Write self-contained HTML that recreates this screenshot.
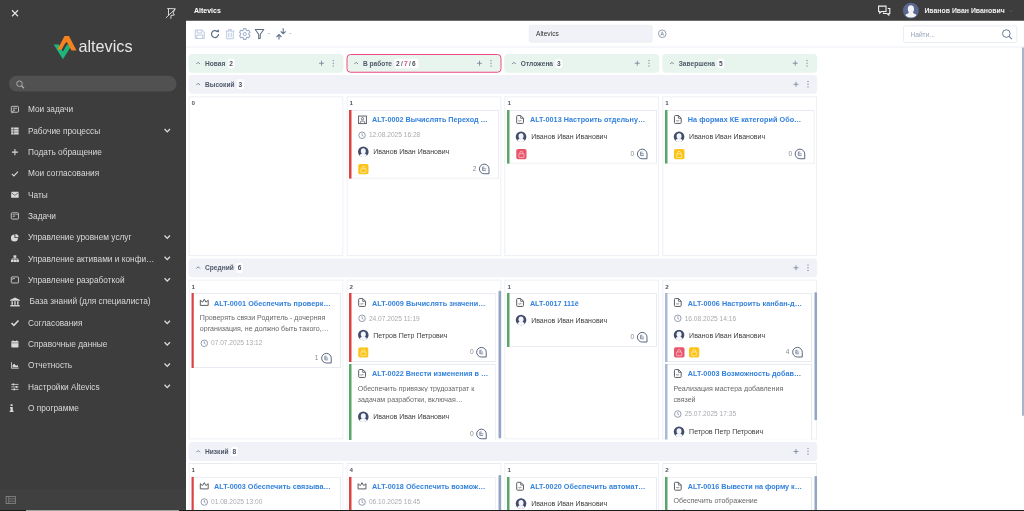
<!DOCTYPE html><html lang="ru"><head><meta charset="utf-8"><title>Altevics</title><style>
*{box-sizing:border-box;margin:0;padding:0}
html,body{width:1024px;height:511px;overflow:hidden;background:#fff}
#wrap{position:absolute;left:0;top:0;width:4096px;height:2044px;transform:scale(.25);transform-origin:0 0;overflow:hidden}
body{font-family:"Liberation Sans",sans-serif;position:relative;color:#444;-webkit-font-smoothing:antialiased}
.abs{position:absolute}
#side{position:absolute;left:0;top:0;width:744px;height:2044px;background:#3d3d3d}
#top{position:absolute;left:744px;top:0;width:3352px;height:82.8px;background:#3d3d3d}
.mi{position:absolute;left:112px;font-size:33.2px;color:#d8d8d8;white-space:nowrap;line-height:40px;height:40px}
.mic{position:absolute;left:43.2px;width:40px;height:40px}
.chev{position:absolute;left:655.2px;width:28px;height:20px}
.colh{position:absolute;top:215.6px;height:75.2px;width:620px;background:#e7f5ee;border-radius:16px}
.rowh{position:absolute;left:754px;width:2514.8px;height:75.2px;background:#f0f2f8;border-radius:16px}
.ht{position:absolute;left:66px;top:17.6px;font-size:26.4px;font-weight:bold;color:#515969;line-height:40px;white-space:nowrap}
.ht .n{display:inline-block;background:#fff;border-radius:8px;padding:0 6px;margin-left:10px;font-weight:bold;color:#4a5160;font-size:26.4px}
.cell{position:absolute;width:620px;height:640px;background:#fff;overflow:hidden}
.bd{position:absolute;left:0;top:0;right:0;bottom:0;border:4px solid #e8ecf2;pointer-events:none}
.cnt{position:absolute;left:12.4px;top:12px;font-size:24.8px;font-weight:bold;color:#4f5560;line-height:32px}
.card{position:absolute;left:10.8px;background:#fff;overflow:hidden}
.stripe{position:absolute;left:0;top:0;bottom:0;width:10px}
.tt{position:absolute;left:91.6px;font-size:28.88px;font-weight:bold;color:#3382dc;white-space:nowrap;line-height:40px}
.dt{position:absolute;left:79.2px;font-size:26.4px;color:#a9abb0;white-space:nowrap;line-height:36px}
.nm{position:absolute;left:96.8px;font-size:28px;color:#3c3c3c;white-space:nowrap;line-height:36px}
.ds{position:absolute;left:34.4px;font-size:28.28px;color:#686868;white-space:nowrap;line-height:44px}
.cn{position:absolute;font-size:26.4px;color:#8a8a8a;line-height:36px;text-align:right;width:40px}
.sb{position:absolute;width:10.8px;background:#93a6c8;border-radius:4px}
svg{display:block;overflow:visible}
.mi,.ht,.cnt,.tt,.dt,.nm,.ds,.cn,.tx{filter:brightness(1)}
</style></head><body><div id="wrap">
<div id="side">
<div class="abs" style="left:46px;top:39.2px"><svg width="28" height="28" viewBox="0 0 7 7" style=""><path d="M.5.5l6 6M6.500.5l-6 6" stroke="#e8e8e8" stroke-width="1.100" fill="none"/></svg></div>
<div class="abs" style="left:662px;top:30px"><svg width="44" height="48" viewBox="0 0 11 12" style=""><path d="M1.700 1L9.900 1.300M3 1.200V7.500M9.900 1.400L.3 10.500M9.500 1.500L7.500 5.500L8.900 7.500L5.500 8L5.300 11.300" stroke="#dcdcdc" stroke-width=".95" fill="none"/></svg></div>
<div class="abs" style="left:212px;top:140px"><svg width="96" height="100" viewBox="0 0 24 25" style=""><path d="M.7 9.500h5.200l4 7 4.300-7h5l-9.300 14.700z" fill="#1fb57a"/><path d="M4.500 14.500l7-13.500h4.500l7.500 14.500h-5l-4.800-8.700-4.200 7.700z" fill="#f58220"/><path d="M9.900 16.500l3.600-6.500 1.800 3.300-3.400 5.900z" fill="#1fb57a"/><path d="M13.500 10l-3.600 6.500-1.100-2 3.600-6.700z" fill="#3d3d3d"/></svg></div>
<div class="abs tx" style="left:314px;top:146.8px;font-size:64.8px;line-height:76px;color:#e6e6e6;white-space:nowrap">altevics</div>
<div class="abs" style="left:36px;top:303.2px;width:670px;height:63.2px;border-radius:32px;background:#515151"></div>
<div class="abs" style="left:64px;top:320.8px"><svg width="34" height="34" viewBox="0 0 8.500 8.500" style=""><circle cx="3.500" cy="3.500" r="2.800" fill="none" stroke="#b4b4b4" stroke-width=".9"/><path d="M5.500 5.500l2.500 2.500" stroke="#b4b4b4" stroke-width="1.100"/></svg></div>
<div class="mic" style="top:421.6px;"><svg width="33.2" height="33.2" viewBox="0 0 9 9" style=""><rect x=".6" y=".9" width="7.800" height="6.400" rx="1" fill="none" stroke="#d9d9d9" stroke-width=".9"/><path d="M2.300 3h4.500M2.300 4.800h2" stroke="#d9d9d9" stroke-width=".8"/><path d="M1 8.500c.5-2 1.500-3 3.500-3" stroke="#d9d9d9" stroke-width=".8" fill="none"/></svg></div>
<div class="mi" style="top:418.4px;left:112px">Мои задачи</div>
<div class="mic" style="top:506.92px;"><svg width="33.2" height="33.2" viewBox="0 0 9 9" style=""><rect x=".5" y=".8" width="8" height="7.600" fill="#d9d9d9"/><path d="M3.200 .8v7.600M.5 3.200h8M.5 5.800h8" stroke="#3d3d3d" stroke-width=".6"/></svg></div>
<div class="mi" style="top:503.72px;left:112px">Рабочие процессы</div>
<div class="chev" style="top:512.52px"><svg width="28" height="20" viewBox="0 0 7 5" style=""><path d="M.8 .8l2.700 2.800 2.700-2.800" stroke="#e0e0e0" stroke-width="1.300" fill="none"/></svg></div>
<div class="mic" style="top:592.24px;"><svg width="33.2" height="33.2" viewBox="0 0 9 9" style=""><path d="M4.500 1.200v6.600M1.200 4.500h6.600" stroke="#d9d9d9" stroke-width="1.150"/></svg></div>
<div class="mi" style="top:589.04px;left:112px">Подать обращение</div>
<div class="mic" style="top:677.56px;"><svg width="33.2" height="33.2" viewBox="0 0 9 9" style=""><path d="M1.200 4.800l2.200 2.200 4.400-4.700" stroke="#d9d9d9" stroke-width="1.200" fill="none"/></svg></div>
<div class="mi" style="top:674.36px;left:112px">Мои согласования</div>
<div class="mic" style="top:762.88px;"><svg width="33.2" height="33.2" viewBox="0 0 9 9" style=""><rect x=".4" y="1.200" width="8.200" height="6.400" rx=".6" fill="#d9d9d9"/><path d="M.4 2l4.100 3 4.100-3" stroke="#3d3d3d" stroke-width=".7" fill="none"/></svg></div>
<div class="mi" style="top:759.68px;left:112px">Чаты</div>
<div class="mic" style="top:848.2px;"><svg width="33.2" height="33.2" viewBox="0 0 9 9" style=""><rect x=".6" y=".9" width="7.800" height="6.800" rx="1" fill="none" stroke="#d9d9d9" stroke-width=".9"/><path d="M2.200 3h3M2.200 4.700h2.200M6 2.600l.6.600 1-1.200" stroke="#d9d9d9" stroke-width=".8" fill="none"/></svg></div>
<div class="mi" style="top:845px;left:112px">Задачи</div>
<div class="mic" style="top:933.52px;"><svg width="33.2" height="33.2" viewBox="0 0 9 9" style=""><path d="M4 1.200v3.800h3.800a3.800 3.800 0 1 1-3.800-3.800z" fill="#d9d9d9"/><path d="M5 .5a3.800 3.800 0 0 1 3.600 3.600h-3.600z" fill="#d9d9d9"/></svg></div>
<div class="mi" style="top:930.32px;left:112px">Управление уровнем услуг</div>
<div class="chev" style="top:939.12px"><svg width="28" height="20" viewBox="0 0 7 5" style=""><path d="M.8 .8l2.700 2.800 2.700-2.800" stroke="#e0e0e0" stroke-width="1.300" fill="none"/></svg></div>
<div class="mic" style="top:1018.84px;"><svg width="33.2" height="33.2" viewBox="0 0 9 9" style=""><rect x="3" y=".6" width="3" height="2.700" fill="#d9d9d9"/><rect x=".3" y="5.200" width="2.700" height="2.700" fill="#d9d9d9"/><rect x="3.200" y="5.200" width="2.700" height="2.700" fill="#d9d9d9"/><rect x="6.100" y="5.200" width="2.700" height="2.700" fill="#d9d9d9"/><path d="M4.500 3v1.500M1.600 5.300v-1h5.900v1" stroke="#d9d9d9" stroke-width=".7" fill="none"/></svg></div>
<div class="mi" style="top:1015.64px;left:112px">Управление активами и конфи…</div>
<div class="chev" style="top:1024.44px"><svg width="28" height="20" viewBox="0 0 7 5" style=""><path d="M.8 .8l2.700 2.800 2.700-2.800" stroke="#e0e0e0" stroke-width="1.300" fill="none"/></svg></div>
<div class="mic" style="top:1104.16px;"><svg width="33.2" height="33.2" viewBox="0 0 9 9" style=""><rect x=".6" y="1" width="7.800" height="6.600" rx=".8" fill="none" stroke="#d9d9d9" stroke-width=".9"/><path d="M2 2.800h2.500M2 2.800v1.200" stroke="#d9d9d9" stroke-width=".8"/></svg></div>
<div class="mi" style="top:1100.96px;left:112px">Управление разработкой</div>
<div class="chev" style="top:1109.76px"><svg width="28" height="20" viewBox="0 0 7 5" style=""><path d="M.8 .8l2.700 2.800 2.700-2.800" stroke="#e0e0e0" stroke-width="1.300" fill="none"/></svg></div>
<div class="mic" style="top:1189.48px;left:40px"><svg width="40" height="36" viewBox="0 0 10 9" style=""><path d="M5 .2l5 2.500v.9h-10v-.9z" fill="#d9d9d9"/><path d="M1.500 4h1.400v3.500h-1.400zM4.300 4h1.400v3.500h-1.400zM7.100 4h1.400v3.500h-1.400z" fill="#d9d9d9"/><rect x=".3" y="7.800" width="9.400" height="1.400" fill="#d9d9d9"/></svg></div>
<div class="mi" style="top:1186.28px;left:118px">База знаний (для специалиста)</div>
<div class="mic" style="top:1274.8px;"><svg width="33.2" height="33.2" viewBox="0 0 9 9" style=""><path d="M.8 4.600l2.600 2.600 5-5.300" stroke="#d9d9d9" stroke-width="1.700" fill="none"/></svg></div>
<div class="mi" style="top:1271.6px;left:112px">Согласования</div>
<div class="chev" style="top:1280.4px"><svg width="28" height="20" viewBox="0 0 7 5" style=""><path d="M.8 .8l2.700 2.800 2.700-2.800" stroke="#e0e0e0" stroke-width="1.300" fill="none"/></svg></div>
<div class="mic" style="top:1360.12px;"><svg width="33.2" height="33.2" viewBox="0 0 9 9" style=""><rect x=".6" y="1.200" width="7.800" height="7" rx=".8" fill="#d9d9d9"/><path d="M2.500 .3v1.800M6.500 .3v1.800" stroke="#d9d9d9" stroke-width=".9"/><path d="M.6 3.100h7.800" stroke="#3d3d3d" stroke-width=".5"/></svg></div>
<div class="mi" style="top:1356.92px;left:112px">Справочные данные</div>
<div class="chev" style="top:1365.72px"><svg width="28" height="20" viewBox="0 0 7 5" style=""><path d="M.8 .8l2.700 2.800 2.700-2.800" stroke="#e0e0e0" stroke-width="1.300" fill="none"/></svg></div>
<div class="mic" style="top:1445.44px;"><svg width="33.2" height="33.2" viewBox="0 0 9 9" style=""><path d="M.8 1v6.600h7.800" stroke="#d9d9d9" stroke-width=".9" fill="none"/><path d="M2 6.600v-2.500l1.800-1.300 2 2 1.800-.8 .6 2.600z" fill="#d9d9d9"/></svg></div>
<div class="mi" style="top:1442.24px;left:112px">Отчетность</div>
<div class="chev" style="top:1451.04px"><svg width="28" height="20" viewBox="0 0 7 5" style=""><path d="M.8 .8l2.700 2.800 2.700-2.800" stroke="#e0e0e0" stroke-width="1.300" fill="none"/></svg></div>
<div class="mic" style="top:1530.76px;"><svg width="33.2" height="33.2" viewBox="0 0 9 9" style=""><path d="M.6 1.800h7.800M.6 4.500h7.800M.6 7.200h7.800" stroke="#d9d9d9" stroke-width=".9"/><rect x="2" y=".8" width="1.600" height="2" fill="#d9d9d9"/><rect x="5.500" y="3.500" width="1.600" height="2" fill="#d9d9d9"/><rect x="3" y="6.200" width="1.600" height="2" fill="#d9d9d9"/></svg></div>
<div class="mi" style="top:1527.56px;left:112px">Настройки Altevics</div>
<div class="chev" style="top:1536.36px"><svg width="28" height="20" viewBox="0 0 7 5" style=""><path d="M.8 .8l2.700 2.800 2.700-2.800" stroke="#e0e0e0" stroke-width="1.300" fill="none"/></svg></div>
<div class="mic" style="top:1616.08px;"><svg width="33.2" height="33.2" viewBox="0 0 9 9" style=""><path d="M-.2 .2h2.200v2h-2.200zM-.7 3.300h2.900v4h.8v1.300h-4.100v-1.300h.8v-2.700h-.4z" fill="#d9d9d9"/></svg></div>
<div class="mi" style="top:1612.88px;left:112px">О программе</div>
<div class="abs" style="left:0;top:1956px;width:744px;height:88px;background:#404040"></div>
<div class="abs" style="left:23.2px;top:1984px"><svg width="40" height="32" viewBox="0 0 10 8" style=""><rect x=".4" y=".4" width="9.200" height="7.200" fill="none" stroke="#8a8a8a" stroke-width=".8"/><path d="M3 .4v7.200M3 2.800h6.600M3 5.200h6.600" stroke="#8a8a8a" stroke-width=".7"/></svg></div>
</div>
<div id="top">
<div class="abs tx" style="left:32px;top:23.6px;font-size:28px;font-weight:bold;color:#fff;line-height:40px">Altevics</div>
<div class="abs" style="left:2768px;top:22px"><svg width="50" height="42" viewBox="0 0 12.500 10.500" style=""><path d="M.6 .6h7.400v5.400h-4.500l-1.800 1.500v-1.500h-1.100z" fill="none" stroke="#f0f0f0" stroke-width="1.100"/><path d="M9.800 3h2v5h-1v1.500l-1.800-1.500h-3.500v-1" fill="none" stroke="#f0f0f0" stroke-width="1.100"/></svg></div>
<div class="abs" style="left:2867.6px;top:11.2px"><svg width="63.2" height="63.2" viewBox="0 0 20 20" style=""><circle cx="10" cy="10" r="10" fill="#5a678f"/><path d="M10 3.200c-2.600 0-4 2-4 4.600 0 1.800.6 3.300 1.500 4.200-.2 1.200-1.300 1.700-2.900 2.400-.9.400-1.300.9-1.500 1.600a10 10 0 0 0 13.800 0c-.2-.7-.6-1.200-1.500-1.600-1.600-.7-2.700-1.200-2.900-2.400.9-.9 1.500-2.400 1.500-4.200 0-2.600-1.400-4.600-4-4.600z" fill="#f1f3f8"/></svg></div>
<div class="abs tx" style="left:2953.6px;top:22.8px;font-size:27.6px;font-weight:bold;color:#f2f2f2;line-height:40px;white-space:nowrap">Иванов Иван Иванович</div>
<div class="abs" style="left:3290px;top:38px"><svg width="20" height="12" viewBox="0 0 5 3" style=""><path d="M.5 .5l2 2 2-2" stroke="#555" stroke-width=".8" fill="none"/></svg></div>
</div>
<div class="abs" style="left:744px;top:186px;width:3352px;height:4px;background:#eceff5"></div>
<div class="abs" style="left:779.2px;top:118px"><svg width="40" height="38" viewBox="0 0 10 9.500" style=""><path d="M.5 .5h7l2 2v6.500h-9z" fill="none" stroke="#b4c3dc" stroke-width=".9"/><path d="M2.500 .5v3h4.500v-3M2 9v-3.500h6v3.500" fill="none" stroke="#b4c3dc" stroke-width=".9"/></svg></div>
<div class="abs" style="left:842px;top:117.2px"><svg width="38" height="38" viewBox="0 0 9.500 9.500" style=""><path d="M8 4.800a3.500 3.500 0 1 1-1.300-2.700" fill="none" stroke="#5c6c86" stroke-width="1.200"/><path d="M5.200 2.800l3.300.3-.2-3.100z" fill="#5c6c86"/></svg></div>
<div class="abs" style="left:902px;top:115.2px"><svg width="36" height="42" viewBox="0 0 9 10.500" style=""><path d="M.3 2.300h8.400M3 2.300v-1.500h3v1.500M1.200 2.300v7.700h6.600v-7.700M3.300 4v4.500M5.700 4v4.500" fill="none" stroke="#b4c3dc" stroke-width=".9"/></svg></div>
<div class="abs" style="left:954.8px;top:111.6px"><svg width="48" height="48" viewBox="0 0 12 12" style=""><path d="M4.49 2.19 L4.74 0.65 L7.26 0.65 L7.51 2.19 L8.55 2.79 L10.01 2.23 L11.27 4.41 L10.06 5.40 L10.06 6.60 L11.27 7.59 L10.01 9.77 L8.55 9.21 L7.51 9.81 L7.26 11.35 L4.74 11.35 L4.49 9.81 L3.45 9.21 L1.99 9.77 L0.73 7.59 L1.94 6.60 L1.94 5.40 L0.73 4.41 L1.99 2.23 L3.45 2.79z" fill="none" stroke="#9fb0cc" stroke-width="1.100" stroke-linejoin="round"/><circle cx="6" cy="6" r="1.600" fill="none" stroke="#9fb0cc" stroke-width="1"/></svg></div>
<div class="abs" style="left:1018.4px;top:115.2px"><svg width="40" height="42" viewBox="0 0 10 10.500" style=""><path d="M.7 .7h8.600l-3.500 4.800v4l-1.600 .5v-4.500z" fill="none" stroke="#5c6c86" stroke-width="1.050" stroke-linejoin="round"/></svg></div>
<div class="abs" style="left:1070.4px;top:132.4px;width:10px;height:4px;background:#c3cee0"></div>
<div class="abs" style="left:1102px;top:112px"><svg width="44" height="48" viewBox="0 0 11 12" style=""><path d="M7.700 .2v5.600M5.200 3.300l2.500 2.500 2.500-2.500M3.500 11.600v-5M1 9l2.500-2.500 2.500 2.500" fill="none" stroke="#64758f" stroke-width="1.150"/></svg></div>
<div class="abs" style="left:1156.8px;top:132.4px;width:10px;height:4px;background:#c3cee0"></div>
<div class="abs" style="left:2116px;top:99.6px;width:494px;height:70px;background:#f0f2f7;border:2.4px solid #e2e6ee;border-radius:8px"></div>
<div class="abs tx" style="left:2144px;top:115.2px;font-size:26.4px;line-height:40px;color:#333">Altevics</div>
<div class="abs" style="left:2631.2px;top:117.2px"><svg width="36" height="36" viewBox="0 0 9 9" style=""><circle cx="4.500" cy="4.500" r="3.800" fill="none" stroke="#7d8aa0" stroke-width=".8"/><path d="M3 6.300l1.500-3.800 1.500 3.800M3.500 5.200h2" fill="none" stroke="#7d8aa0" stroke-width=".7"/></svg></div>
<div class="abs" style="left:3612px;top:102.4px;width:457.2px;height:68.8px;background:#fff;border:3.2px solid #dfe5ee;border-radius:10px"></div>
<div class="abs tx" style="left:3642px;top:117.2px;font-size:26.4px;line-height:40px;color:#9aa6ba">Найти...</div>
<div class="abs" style="left:4006px;top:115.2px"><svg width="44" height="44" viewBox="0 0 11 11" style=""><circle cx="4.800" cy="4.800" r="3.800" fill="none" stroke="#6b7a93" stroke-width="1"/><path d="M7.600 7.600l2.800 2.800" stroke="#6b7a93" stroke-width="1.100"/></svg></div>
<div class="abs" style="left:4087.6px;top:190.4px;width:8.4px;height:1472.4px;background:#a5b4cf"></div>
<div class="colh" style="left:754px;">
<div class="abs" style="left:30px;top:31.2px"><svg width="17.6" height="10.4" viewBox="0 0 4.400 2.600" style=""><path d="M.4 2.300l1.800-1.800 1.800 1.800" stroke="#747e92" stroke-width=".95" fill="none"/></svg></div>
<div class="ht" style="left:66px;top:18.8px">Новая<span class="n">2</span></div>
<div class="abs" style="left:522px;top:27.6px"><svg width="20" height="20" viewBox="0 0 5 5" style=""><path d="M2.500 0v5M0 2.500h5" stroke="#717d94" stroke-width=".8"/></svg></div>
<div class="abs" style="left:574.8px;top:23.6px"><svg width="8" height="28" viewBox="0 0 2 7" style=""><circle cx="1" cy=".8" r=".7" fill="#8792a6"/><circle cx="1" cy="3.500" r=".7" fill="#8792a6"/><circle cx="1" cy="6.200" r=".7" fill="#8792a6"/></svg></div>
</div>
<div class="colh" style="left:1385.6px;border:4px solid #ef4a80;">
<div class="abs" style="left:26px;top:27.2px"><svg width="17.6" height="10.4" viewBox="0 0 4.400 2.600" style=""><path d="M.4 2.300l1.800-1.800 1.800 1.800" stroke="#747e92" stroke-width=".95" fill="none"/></svg></div>
<div class="ht" style="left:62px;top:14.8px">В работе<span class="n" style="letter-spacing:5px">2<span style="color:#5d6472">/</span><span style="color:#ee4b7f">7</span><span style="color:#5d6472">/</span>6</span></div>
<div class="abs" style="left:518px;top:23.6px"><svg width="20" height="20" viewBox="0 0 5 5" style=""><path d="M2.500 0v5M0 2.500h5" stroke="#717d94" stroke-width=".8"/></svg></div>
<div class="abs" style="left:570.8px;top:19.6px"><svg width="8" height="28" viewBox="0 0 2 7" style=""><circle cx="1" cy=".8" r=".7" fill="#8792a6"/><circle cx="1" cy="3.500" r=".7" fill="#8792a6"/><circle cx="1" cy="6.200" r=".7" fill="#8792a6"/></svg></div>
</div>
<div class="colh" style="left:2017.2px;">
<div class="abs" style="left:30px;top:31.2px"><svg width="17.6" height="10.4" viewBox="0 0 4.400 2.600" style=""><path d="M.4 2.300l1.800-1.800 1.800 1.800" stroke="#747e92" stroke-width=".95" fill="none"/></svg></div>
<div class="ht" style="left:66px;top:18.8px">Отложена<span class="n">3</span></div>
<div class="abs" style="left:522px;top:27.6px"><svg width="20" height="20" viewBox="0 0 5 5" style=""><path d="M2.500 0v5M0 2.500h5" stroke="#717d94" stroke-width=".8"/></svg></div>
<div class="abs" style="left:574.8px;top:23.6px"><svg width="8" height="28" viewBox="0 0 2 7" style=""><circle cx="1" cy=".8" r=".7" fill="#8792a6"/><circle cx="1" cy="3.500" r=".7" fill="#8792a6"/><circle cx="1" cy="6.200" r=".7" fill="#8792a6"/></svg></div>
</div>
<div class="colh" style="left:2648.8px;">
<div class="abs" style="left:30px;top:31.2px"><svg width="17.6" height="10.4" viewBox="0 0 4.400 2.600" style=""><path d="M.4 2.300l1.800-1.800 1.800 1.800" stroke="#747e92" stroke-width=".95" fill="none"/></svg></div>
<div class="ht" style="left:66px;top:18.8px">Завершена<span class="n">5</span></div>
<div class="abs" style="left:522px;top:27.6px"><svg width="20" height="20" viewBox="0 0 5 5" style=""><path d="M2.500 0v5M0 2.500h5" stroke="#717d94" stroke-width=".8"/></svg></div>
<div class="abs" style="left:574.8px;top:23.6px"><svg width="8" height="28" viewBox="0 0 2 7" style=""><circle cx="1" cy=".8" r=".7" fill="#8792a6"/><circle cx="1" cy="3.500" r=".7" fill="#8792a6"/><circle cx="1" cy="6.200" r=".7" fill="#8792a6"/></svg></div>
</div>
<div class="rowh" style="top:299.6px">
<div class="abs" style="left:30px;top:31.2px"><svg width="17.6" height="10.4" viewBox="0 0 4.400 2.600" style=""><path d="M.4 2.300l1.800-1.800 1.800 1.800" stroke="#747e92" stroke-width=".95" fill="none"/></svg></div>
<div class="ht">Высокий<span class="n">3</span></div>
<div class="abs" style="left:2419.6px;top:27.2px"><svg width="20" height="20" viewBox="0 0 5 5" style=""><path d="M2.500 0v5M0 2.500h5" stroke="#717d94" stroke-width=".8"/></svg></div>
<div class="abs" style="left:2473.6px;top:23.2px"><svg width="8" height="28" viewBox="0 0 2 7" style=""><circle cx="1" cy=".8" r=".7" fill="#8792a6"/><circle cx="1" cy="3.500" r=".7" fill="#8792a6"/><circle cx="1" cy="6.200" r=".7" fill="#8792a6"/></svg></div>
</div>
<div class="rowh" style="top:1034px">
<div class="abs" style="left:30px;top:31.2px"><svg width="17.6" height="10.4" viewBox="0 0 4.400 2.600" style=""><path d="M.4 2.300l1.800-1.800 1.800 1.800" stroke="#747e92" stroke-width=".95" fill="none"/></svg></div>
<div class="ht">Средний<span class="n">6</span></div>
<div class="abs" style="left:2419.6px;top:27.2px"><svg width="20" height="20" viewBox="0 0 5 5" style=""><path d="M2.500 0v5M0 2.500h5" stroke="#717d94" stroke-width=".8"/></svg></div>
<div class="abs" style="left:2473.6px;top:23.2px"><svg width="8" height="28" viewBox="0 0 2 7" style=""><circle cx="1" cy=".8" r=".7" fill="#8792a6"/><circle cx="1" cy="3.500" r=".7" fill="#8792a6"/><circle cx="1" cy="6.200" r=".7" fill="#8792a6"/></svg></div>
</div>
<div class="rowh" style="top:1768.4px">
<div class="abs" style="left:30px;top:31.2px"><svg width="17.6" height="10.4" viewBox="0 0 4.400 2.600" style=""><path d="M.4 2.300l1.800-1.800 1.800 1.800" stroke="#747e92" stroke-width=".95" fill="none"/></svg></div>
<div class="ht">Низкий<span class="n">8</span></div>
<div class="abs" style="left:2419.6px;top:27.2px"><svg width="20" height="20" viewBox="0 0 5 5" style=""><path d="M2.500 0v5M0 2.500h5" stroke="#717d94" stroke-width=".8"/></svg></div>
<div class="abs" style="left:2473.6px;top:23.2px"><svg width="8" height="28" viewBox="0 0 2 7" style=""><circle cx="1" cy=".8" r=".7" fill="#8792a6"/><circle cx="1" cy="3.500" r=".7" fill="#8792a6"/><circle cx="1" cy="6.200" r=".7" fill="#8792a6"/></svg></div>
</div>
<div class="cell" style="left:754px;top:385.2px">
<div class="bd"></div>
<div class="cnt">0</div>
</div>
<div class="cell" style="left:1385.6px;top:385.2px">
<div class="bd"></div>
<div class="cnt">1</div>
<div class="card" style="top:54.4px;width:599.6px;height:275.6px"><div class="bd"></div><div class="stripe" style="background:#dc4242"></div><div class="abs" style="left:35.2px;top:22.4px"><svg width="36" height="34.4" viewBox="0 0 9 8.600" style=""><rect x=".55" y=".55" width="7.900" height="7.500" fill="none" stroke="#666b73" stroke-width="1.050"/><circle cx="4.500" cy="3.200" r="1.150" fill="none" stroke="#666b73" stroke-width=".9"/><path d="M2.400 8v-1.300a1.100 1.100 0 0 1 1.100-1.100h2a1.100 1.100 0 0 1 1.100 1.100v1.300" fill="none" stroke="#666b73" stroke-width=".9"/></svg></div><div class="tt" style="top:19.6px;letter-spacing:-0.008px">ALT-0002 Вычислять Переход …</div><div class="abs" style="left:36.8px;top:86px"><svg width="30.4" height="30.4" viewBox="0 0 16 16" style=""><circle cx="8" cy="8" r="6.900" fill="none" stroke="#818da1" stroke-width="1.800"/><path d="M8 4v4.300l2.800 1.700" fill="none" stroke="#818da1" stroke-width="1.700"/></svg></div><div class="dt" style="top:82.4px">12.08.2025 16:28</div><div class="abs" style="left:35.2px;top:146.4px"><svg width="42.4" height="42.4" viewBox="0 0 20 20" style=""><circle cx="10" cy="10" r="10" fill="#414c6e"/><ellipse cx="10" cy="8.600" rx="4.700" ry="5.500" fill="#f4f6fa"/><path d="M3.300 17.400c.5-2.500 2.400-3.300 4.700-4h4c2.300.7 4.200 1.500 4.700 4a10 10 0 0 1-13.400 0z" fill="#f4f6fa"/></svg></div><div class="nm" style="top:150.4px">Иванов Иван Иванович</div><div class="abs" style="left:36.8px;top:216.4px;width:41.2px;height:41.2px;border-radius:7.2px;background:#fcc419"><svg width="41.2" height="41.2" viewBox="0 0 19 19" style=""><rect x="4.800" y="8.800" width="9.400" height="6.800" rx="1" fill="none" stroke="#fff" stroke-width="1.200" opacity=".75"/><path d="M6.800 8.800v-1.800a2.700 2.700 0 0 1 5.400 0v1.800" fill="none" stroke="#fff" stroke-width="1.200" opacity=".75"/></svg></div><div class="cn" style="left:469.2px;top:218px">2</div><div class="abs" style="left:518.8px;top:214.8px"><svg width="43.6" height="43.6" viewBox="0 0 20 20" style=""><path d="M10 1.200a8.800 8.800 0 1 0 0 17.600h8.800v-8.800a8.800 8.800 0 0 0-8.800-8.800z" fill="none" stroke="#55637d" stroke-width="1.800"/><path d="M7 6.400h3.500M7 9.700h6.200M7 13h6.200M7 6.400v6.600" fill="none" stroke="#5f6d86" stroke-width="1.350"/></svg></div></div>
</div>
<div class="cell" style="left:2017.2px;top:385.2px">
<div class="bd"></div>
<div class="cnt">1</div>
<div class="card" style="top:54.4px;width:599.6px;height:215.6px"><div class="bd"></div><div class="stripe" style="background:#5aa66a"></div><div class="abs" style="left:35.6px;top:20px"><svg width="32" height="36" viewBox="0 0 8 9" style=""><path d="M1.600 .55h3.200l2.650 2.650v4.350a.9.9 0 0 1-.9.9h-4.950a.9.9 0 0 1-.9-.9v-6.100a.9.9 0 0 1 .9-.9z" fill="none" stroke="#595e66" stroke-width="1"/><path d="M4.700 .7v2.600h2.600" fill="none" stroke="#595e66" stroke-width=".85"/><path d="M2.400 6.100c.5-.95.9.5 1.500-.3s.6.400 1.500 0" fill="none" stroke="#595e66" stroke-width=".8"/></svg></div><div class="tt" style="top:19.6px;letter-spacing:0.12px">ALT-0013 Настроить отдельну…</div><div class="abs" style="left:35.2px;top:86.4px"><svg width="42.4" height="42.4" viewBox="0 0 20 20" style=""><circle cx="10" cy="10" r="10" fill="#414c6e"/><ellipse cx="10" cy="8.600" rx="4.700" ry="5.500" fill="#f4f6fa"/><path d="M3.300 17.400c.5-2.500 2.400-3.300 4.700-4h4c2.300.7 4.200 1.500 4.700 4a10 10 0 0 1-13.400 0z" fill="#f4f6fa"/></svg></div><div class="nm" style="top:90.4px">Иванов Иван Иванович</div><div class="abs" style="left:36.8px;top:156.4px;width:41.2px;height:41.2px;border-radius:7.2px;background:#e9566b"><svg width="41.2" height="41.2" viewBox="0 0 19 19" style=""><rect x="4.800" y="8.800" width="9.400" height="6.800" rx="1" fill="none" stroke="#fff" stroke-width="1.200" opacity=".75"/><path d="M6.800 8.800v-1.800a2.700 2.700 0 0 1 5.400 0v1.800" fill="none" stroke="#fff" stroke-width="1.200" opacity=".75"/></svg></div><div class="cn" style="left:469.2px;top:158px">0</div><div class="abs" style="left:518.8px;top:154.8px"><svg width="43.6" height="43.6" viewBox="0 0 20 20" style=""><path d="M10 1.200a8.800 8.800 0 1 0 0 17.600h8.800v-8.800a8.800 8.800 0 0 0-8.800-8.800z" fill="none" stroke="#55637d" stroke-width="1.800"/><path d="M7 6.400h3.500M7 9.700h6.200M7 13h6.200M7 6.400v6.600" fill="none" stroke="#5f6d86" stroke-width="1.350"/></svg></div></div>
</div>
<div class="cell" style="left:2648.8px;top:385.2px">
<div class="bd"></div>
<div class="cnt">1</div>
<div class="card" style="top:54.4px;width:599.6px;height:215.6px"><div class="bd"></div><div class="stripe" style="background:#5aa66a"></div><div class="abs" style="left:35.6px;top:20px"><svg width="32" height="36" viewBox="0 0 8 9" style=""><path d="M1.600 .55h3.200l2.650 2.650v4.350a.9.9 0 0 1-.9.9h-4.950a.9.9 0 0 1-.9-.9v-6.100a.9.9 0 0 1 .9-.9z" fill="none" stroke="#595e66" stroke-width="1"/><path d="M4.700 .7v2.600h2.600" fill="none" stroke="#595e66" stroke-width=".85"/><path d="M2.400 6.100c.5-.95.9.5 1.500-.3s.6.400 1.500 0" fill="none" stroke="#595e66" stroke-width=".8"/></svg></div><div class="tt" style="top:19.6px;letter-spacing:0.208px">На формах КЕ категорий Обо…</div><div class="abs" style="left:35.2px;top:86.4px"><svg width="42.4" height="42.4" viewBox="0 0 20 20" style=""><circle cx="10" cy="10" r="10" fill="#414c6e"/><ellipse cx="10" cy="8.600" rx="4.700" ry="5.500" fill="#f4f6fa"/><path d="M3.300 17.400c.5-2.500 2.400-3.300 4.700-4h4c2.300.7 4.200 1.500 4.700 4a10 10 0 0 1-13.400 0z" fill="#f4f6fa"/></svg></div><div class="nm" style="top:90.4px">Иванов Иван Иванович</div><div class="abs" style="left:36.8px;top:156.4px;width:41.2px;height:41.2px;border-radius:7.2px;background:#fcc419"><svg width="41.2" height="41.2" viewBox="0 0 19 19" style=""><rect x="4.800" y="8.800" width="9.400" height="6.800" rx="1" fill="none" stroke="#fff" stroke-width="1.200" opacity=".75"/><path d="M6.800 8.800v-1.800a2.700 2.700 0 0 1 5.400 0v1.800" fill="none" stroke="#fff" stroke-width="1.200" opacity=".75"/></svg></div><div class="cn" style="left:469.2px;top:158px">0</div><div class="abs" style="left:518.8px;top:154.8px"><svg width="43.6" height="43.6" viewBox="0 0 20 20" style=""><path d="M10 1.200a8.800 8.800 0 1 0 0 17.600h8.800v-8.800a8.800 8.800 0 0 0-8.800-8.800z" fill="none" stroke="#55637d" stroke-width="1.800"/><path d="M7 6.400h3.500M7 9.700h6.200M7 13h6.200M7 6.400v6.600" fill="none" stroke="#5f6d86" stroke-width="1.350"/></svg></div></div>
</div>
<div class="cell" style="left:754px;top:1118px">
<div class="bd"></div>
<div class="cnt">1</div>
<div class="card" style="top:54.4px;width:599.6px;height:299.2px"><div class="bd"></div><div class="stripe" style="background:#dc4242"></div><div class="abs" style="left:34px;top:21.2px"><svg width="36" height="30" viewBox="0 0 9 7.500" style=""><path d="M.55 1.700l2.300 1.900 1.650-2.900 1.650 2.900 2.300-1.900v5.200h-7.900z" fill="none" stroke="#595e66" stroke-width="1" stroke-linejoin="miter"/></svg></div><div class="tt" style="top:19.6px;letter-spacing:0.208px">ALT-0001 Обеспечить проверк…</div><div class="ds" style="top:74.4px">Проверять связи Родитель - дочерняя</div><div class="ds" style="top:118px">организация, не должно быть такого,…</div><div class="abs" style="left:36.8px;top:185.6px"><svg width="30.4" height="30.4" viewBox="0 0 16 16" style=""><circle cx="8" cy="8" r="6.900" fill="none" stroke="#818da1" stroke-width="1.800"/><path d="M8 4v4.300l2.800 1.700" fill="none" stroke="#818da1" stroke-width="1.700"/></svg></div><div class="dt" style="top:182px">07.07.2025 13:12</div><div class="cn" style="left:469.2px;top:241.6px">1</div><div class="abs" style="left:518.8px;top:238.4px"><svg width="43.6" height="43.6" viewBox="0 0 20 20" style=""><path d="M10 1.200a8.800 8.800 0 1 0 0 17.600h8.800v-8.800a8.800 8.800 0 0 0-8.800-8.800z" fill="none" stroke="#55637d" stroke-width="1.800"/><path d="M7 6.400h3.500M7 9.700h6.200M7 13h6.200M7 6.400v6.600" fill="none" stroke="#5f6d86" stroke-width="1.350"/></svg></div></div>
</div>
<div class="cell" style="left:1385.6px;top:1118px">
<div class="bd"></div>
<div class="cnt">2</div>
<div class="card" style="top:54.4px;width:588.8px;height:275.6px"><div class="bd"></div><div class="stripe" style="background:#dc4242"></div><div class="abs" style="left:35.6px;top:20px"><svg width="32" height="36" viewBox="0 0 8 9" style=""><path d="M1.600 .55h3.200l2.650 2.650v4.350a.9.9 0 0 1-.9.9h-4.950a.9.9 0 0 1-.9-.9v-6.100a.9.9 0 0 1 .9-.9z" fill="none" stroke="#595e66" stroke-width="1"/><path d="M4.700 .7v2.600h2.600" fill="none" stroke="#595e66" stroke-width=".85"/><path d="M2.400 6.100c.5-.95.9.5 1.500-.3s.6.400 1.500 0" fill="none" stroke="#595e66" stroke-width=".8"/></svg></div><div class="tt" style="top:19.6px;letter-spacing:0.168px">ALT-0009 Вычислять значени…</div><div class="abs" style="left:36.8px;top:86px"><svg width="30.4" height="30.4" viewBox="0 0 16 16" style=""><circle cx="8" cy="8" r="6.900" fill="none" stroke="#818da1" stroke-width="1.800"/><path d="M8 4v4.300l2.800 1.700" fill="none" stroke="#818da1" stroke-width="1.700"/></svg></div><div class="dt" style="top:82.4px">24.07.2025 11:19</div><div class="abs" style="left:35.2px;top:146.4px"><svg width="42.4" height="42.4" viewBox="0 0 20 20" style=""><circle cx="10" cy="10" r="10" fill="#414c6e"/><ellipse cx="10" cy="8.600" rx="4.700" ry="5.500" fill="#f4f6fa"/><path d="M3.300 17.400c.5-2.500 2.400-3.300 4.700-4h4c2.300.7 4.200 1.500 4.700 4a10 10 0 0 1-13.400 0z" fill="#f4f6fa"/></svg></div><div class="nm" style="top:150.4px">Петров Петр Петрович</div><div class="abs" style="left:36.8px;top:216.4px;width:41.2px;height:41.2px;border-radius:7.2px;background:#fcc419"><svg width="41.2" height="41.2" viewBox="0 0 19 19" style=""><rect x="4.800" y="8.800" width="9.400" height="6.800" rx="1" fill="none" stroke="#fff" stroke-width="1.200" opacity=".75"/><path d="M6.800 8.800v-1.800a2.700 2.700 0 0 1 5.400 0v1.800" fill="none" stroke="#fff" stroke-width="1.200" opacity=".75"/></svg></div><div class="cn" style="left:458.4px;top:218px">0</div><div class="abs" style="left:508px;top:214.8px"><svg width="43.6" height="43.6" viewBox="0 0 20 20" style=""><path d="M10 1.200a8.800 8.800 0 1 0 0 17.600h8.800v-8.800a8.800 8.800 0 0 0-8.800-8.800z" fill="none" stroke="#55637d" stroke-width="1.800"/><path d="M7 6.400h3.500M7 9.700h6.200M7 13h6.200M7 6.400v6.600" fill="none" stroke="#5f6d86" stroke-width="1.350"/></svg></div></div>
<div class="card" style="top:337.6px;width:588.8px;height:319.2px"><div class="bd"></div><div class="stripe" style="background:#5aa66a"></div><div class="abs" style="left:35.6px;top:20px"><svg width="32" height="36" viewBox="0 0 8 9" style=""><path d="M1.600 .55h3.200l2.650 2.650v4.350a.9.9 0 0 1-.9.9h-4.950a.9.9 0 0 1-.9-.9v-6.100a.9.9 0 0 1 .9-.9z" fill="none" stroke="#595e66" stroke-width="1"/><path d="M4.700 .7v2.600h2.600" fill="none" stroke="#595e66" stroke-width=".85"/><path d="M2.400 6.100c.5-.95.9.5 1.500-.3s.6.400 1.500 0" fill="none" stroke="#595e66" stroke-width=".8"/></svg></div><div class="tt" style="top:19.6px;letter-spacing:0.124px">ALT-0022 Внести изменения в …</div><div class="ds" style="top:74.4px">Обеспечить привязку трудозатрат к</div><div class="ds" style="top:118px">задачам разработки, включая…</div><div class="abs" style="left:35.2px;top:190px"><svg width="42.4" height="42.4" viewBox="0 0 20 20" style=""><circle cx="10" cy="10" r="10" fill="#414c6e"/><ellipse cx="10" cy="8.600" rx="4.700" ry="5.500" fill="#f4f6fa"/><path d="M3.300 17.400c.5-2.500 2.400-3.300 4.700-4h4c2.300.7 4.200 1.500 4.700 4a10 10 0 0 1-13.400 0z" fill="#f4f6fa"/></svg></div><div class="nm" style="top:194px">Иванов Иван Иванович</div><div class="cn" style="left:458.4px;top:261.6px">0</div><div class="abs" style="left:508px;top:258.4px"><svg width="43.6" height="43.6" viewBox="0 0 20 20" style=""><path d="M10 1.200a8.800 8.800 0 1 0 0 17.600h8.800v-8.800a8.800 8.800 0 0 0-8.800-8.800z" fill="none" stroke="#55637d" stroke-width="1.800"/><path d="M7 6.400h3.500M7 9.700h6.200M7 13h6.200M7 6.400v6.600" fill="none" stroke="#5f6d86" stroke-width="1.350"/></svg></div></div>
<div class="sb" style="left:608.8px;top:44.8px;height:590.4px"></div>
</div>
<div class="cell" style="left:2017.2px;top:1118px">
<div class="bd"></div>
<div class="cnt">1</div>
<div class="card" style="top:54.4px;width:599.6px;height:215.6px"><div class="bd"></div><div class="stripe" style="background:#5aa66a"></div><div class="abs" style="left:35.6px;top:20px"><svg width="32" height="36" viewBox="0 0 8 9" style=""><path d="M1.600 .55h3.200l2.650 2.650v4.350a.9.9 0 0 1-.9.9h-4.950a.9.9 0 0 1-.9-.9v-6.100a.9.9 0 0 1 .9-.9z" fill="none" stroke="#595e66" stroke-width="1"/><path d="M4.700 .7v2.600h2.600" fill="none" stroke="#595e66" stroke-width=".85"/><path d="M2.400 6.100c.5-.95.9.5 1.500-.3s.6.400 1.500 0" fill="none" stroke="#595e66" stroke-width=".8"/></svg></div><div class="tt" style="top:19.6px;letter-spacing:0.016px">ALT-0017 111ё</div><div class="abs" style="left:35.2px;top:86.4px"><svg width="42.4" height="42.4" viewBox="0 0 20 20" style=""><circle cx="10" cy="10" r="10" fill="#414c6e"/><ellipse cx="10" cy="8.600" rx="4.700" ry="5.500" fill="#f4f6fa"/><path d="M3.300 17.400c.5-2.500 2.400-3.300 4.700-4h4c2.300.7 4.200 1.500 4.700 4a10 10 0 0 1-13.400 0z" fill="#f4f6fa"/></svg></div><div class="nm" style="top:90.4px">Иванов Иван Иванович</div><div class="cn" style="left:469.2px;top:158px">0</div><div class="abs" style="left:518.8px;top:154.8px"><svg width="43.6" height="43.6" viewBox="0 0 20 20" style=""><path d="M10 1.200a8.800 8.800 0 1 0 0 17.600h8.800v-8.800a8.800 8.800 0 0 0-8.800-8.800z" fill="none" stroke="#55637d" stroke-width="1.800"/><path d="M7 6.400h3.500M7 9.700h6.200M7 13h6.200M7 6.400v6.600" fill="none" stroke="#5f6d86" stroke-width="1.350"/></svg></div></div>
</div>
<div class="cell" style="left:2648.8px;top:1118px">
<div class="bd"></div>
<div class="cnt">2</div>
<div class="card" style="top:54.4px;width:588.8px;height:275.6px"><div class="bd"></div><div class="stripe" style="background:#a9b9d6"></div><div class="abs" style="left:35.6px;top:20px"><svg width="32" height="36" viewBox="0 0 8 9" style=""><path d="M1.600 .55h3.200l2.650 2.650v4.350a.9.9 0 0 1-.9.9h-4.950a.9.9 0 0 1-.9-.9v-6.100a.9.9 0 0 1 .9-.9z" fill="none" stroke="#595e66" stroke-width="1"/><path d="M4.700 .7v2.600h2.600" fill="none" stroke="#595e66" stroke-width=".85"/><path d="M2.400 6.100c.5-.95.9.5 1.500-.3s.6.400 1.500 0" fill="none" stroke="#595e66" stroke-width=".8"/></svg></div><div class="tt" style="top:19.6px;letter-spacing:0.228px">ALT-0006 Настроить канбан-д…</div><div class="abs" style="left:36.8px;top:86px"><svg width="30.4" height="30.4" viewBox="0 0 16 16" style=""><circle cx="8" cy="8" r="6.900" fill="none" stroke="#818da1" stroke-width="1.800"/><path d="M8 4v4.300l2.800 1.700" fill="none" stroke="#818da1" stroke-width="1.700"/></svg></div><div class="dt" style="top:82.4px">16.08.2025 14:16</div><div class="abs" style="left:35.2px;top:146.4px"><svg width="42.4" height="42.4" viewBox="0 0 20 20" style=""><circle cx="10" cy="10" r="10" fill="#414c6e"/><ellipse cx="10" cy="8.600" rx="4.700" ry="5.500" fill="#f4f6fa"/><path d="M3.300 17.400c.5-2.500 2.400-3.300 4.700-4h4c2.300.7 4.200 1.500 4.700 4a10 10 0 0 1-13.400 0z" fill="#f4f6fa"/></svg></div><div class="nm" style="top:150.4px">Иванов Иван Иванович</div><div class="abs" style="left:36.8px;top:216.4px;width:41.2px;height:41.2px;border-radius:7.2px;background:#e9566b"><svg width="41.2" height="41.2" viewBox="0 0 19 19" style=""><rect x="4.800" y="8.800" width="9.400" height="6.800" rx="1" fill="none" stroke="#fff" stroke-width="1.200" opacity=".75"/><path d="M6.800 8.800v-1.800a2.700 2.700 0 0 1 5.400 0v1.800" fill="none" stroke="#fff" stroke-width="1.200" opacity=".75"/></svg></div><div class="abs" style="left:96px;top:216.4px;width:41.2px;height:41.2px;border-radius:7.2px;background:#fcc419"><svg width="41.2" height="41.2" viewBox="0 0 19 19" style=""><rect x="4.800" y="8.800" width="9.400" height="6.800" rx="1" fill="none" stroke="#fff" stroke-width="1.200" opacity=".75"/><path d="M6.800 8.800v-1.800a2.700 2.700 0 0 1 5.400 0v1.800" fill="none" stroke="#fff" stroke-width="1.200" opacity=".75"/></svg></div><div class="cn" style="left:458.4px;top:218px">4</div><div class="abs" style="left:508px;top:214.8px"><svg width="43.6" height="43.6" viewBox="0 0 20 20" style=""><path d="M10 1.200a8.800 8.800 0 1 0 0 17.600h8.800v-8.800a8.800 8.800 0 0 0-8.800-8.800z" fill="none" stroke="#55637d" stroke-width="1.800"/><path d="M7 6.400h3.500M7 9.700h6.200M7 13h6.200M7 6.400v6.600" fill="none" stroke="#5f6d86" stroke-width="1.350"/></svg></div></div>
<div class="card" style="top:337.6px;width:588.8px;height:379.2px"><div class="bd"></div><div class="stripe" style="background:#a9b9d6"></div><div class="abs" style="left:35.6px;top:20px"><svg width="32" height="36" viewBox="0 0 8 9" style=""><path d="M1.600 .55h3.200l2.650 2.650v4.350a.9.9 0 0 1-.9.9h-4.950a.9.9 0 0 1-.9-.9v-6.100a.9.9 0 0 1 .9-.9z" fill="none" stroke="#595e66" stroke-width="1"/><path d="M4.700 .7v2.600h2.600" fill="none" stroke="#595e66" stroke-width=".85"/><path d="M2.400 6.100c.5-.95.9.5 1.500-.3s.6.400 1.500 0" fill="none" stroke="#595e66" stroke-width=".8"/></svg></div><div class="tt" style="top:19.6px;letter-spacing:0.06px">ALT-0003 Возможность добав…</div><div class="ds" style="top:74.4px">Реализация мастера добавления</div><div class="ds" style="top:118px">связей</div><div class="abs" style="left:36.8px;top:185.6px"><svg width="30.4" height="30.4" viewBox="0 0 16 16" style=""><circle cx="8" cy="8" r="6.900" fill="none" stroke="#818da1" stroke-width="1.800"/><path d="M8 4v4.300l2.800 1.700" fill="none" stroke="#818da1" stroke-width="1.700"/></svg></div><div class="dt" style="top:182px">25.07.2025 17:35</div><div class="abs" style="left:35.2px;top:250px"><svg width="42.4" height="42.4" viewBox="0 0 20 20" style=""><circle cx="10" cy="10" r="10" fill="#414c6e"/><ellipse cx="10" cy="8.600" rx="4.700" ry="5.500" fill="#f4f6fa"/><path d="M3.300 17.400c.5-2.500 2.400-3.300 4.700-4h4c2.300.7 4.200 1.500 4.700 4a10 10 0 0 1-13.400 0z" fill="#f4f6fa"/></svg></div><div class="nm" style="top:254px">Петров Петр Петрович</div><div class="cn" style="left:458.4px;top:321.6px">0</div><div class="abs" style="left:508px;top:318.4px"><svg width="43.6" height="43.6" viewBox="0 0 20 20" style=""><path d="M10 1.200a8.800 8.800 0 1 0 0 17.600h8.800v-8.800a8.800 8.800 0 0 0-8.800-8.800z" fill="none" stroke="#55637d" stroke-width="1.800"/><path d="M7 6.400h3.500M7 9.700h6.200M7 13h6.200M7 6.400v6.600" fill="none" stroke="#5f6d86" stroke-width="1.350"/></svg></div></div>
<div class="sb" style="left:608.8px;top:51.2px;height:512px"></div>
</div>
<div class="cell" style="left:754px;top:1852.4px">
<div class="bd"></div>
<div class="cnt">1</div>
<div class="card" style="top:54.4px;width:599.6px;height:199.6px"><div class="bd"></div><div class="stripe" style="background:#dc4242"></div><div class="abs" style="left:34px;top:21.2px"><svg width="36" height="30" viewBox="0 0 9 7.500" style=""><path d="M.55 1.700l2.300 1.900 1.650-2.900 1.650 2.900 2.300-1.900v5.200h-7.900z" fill="none" stroke="#595e66" stroke-width="1" stroke-linejoin="miter"/></svg></div><div class="tt" style="top:19.6px;letter-spacing:0.044px">ALT-0003 Обеспечить связыва…</div><div class="abs" style="left:36.8px;top:86px"><svg width="30.4" height="30.4" viewBox="0 0 16 16" style=""><circle cx="8" cy="8" r="6.900" fill="none" stroke="#818da1" stroke-width="1.800"/><path d="M8 4v4.300l2.800 1.700" fill="none" stroke="#818da1" stroke-width="1.700"/></svg></div><div class="dt" style="top:82.4px">01.08.2025 13:00</div><div class="cn" style="left:469.2px;top:142px">0</div><div class="abs" style="left:518.8px;top:138.8px"><svg width="43.6" height="43.6" viewBox="0 0 20 20" style=""><path d="M10 1.200a8.800 8.800 0 1 0 0 17.600h8.800v-8.800a8.800 8.800 0 0 0-8.800-8.800z" fill="none" stroke="#55637d" stroke-width="1.800"/><path d="M7 6.400h3.500M7 9.700h6.200M7 13h6.200M7 6.400v6.600" fill="none" stroke="#5f6d86" stroke-width="1.350"/></svg></div></div>
</div>
<div class="cell" style="left:1385.6px;top:1852.4px">
<div class="bd"></div>
<div class="cnt">4</div>
<div class="card" style="top:54.4px;width:588.8px;height:199.6px"><div class="bd"></div><div class="stripe" style="background:#dc4242"></div><div class="abs" style="left:34px;top:21.2px"><svg width="36" height="30" viewBox="0 0 9 7.500" style=""><path d="M.55 1.700l2.300 1.900 1.650-2.900 1.650 2.900 2.300-1.900v5.200h-7.900z" fill="none" stroke="#595e66" stroke-width="1" stroke-linejoin="miter"/></svg></div><div class="tt" style="top:19.6px;letter-spacing:0.172px">ALT-0018 Обеспечить возмож…</div><div class="abs" style="left:36.8px;top:86px"><svg width="30.4" height="30.4" viewBox="0 0 16 16" style=""><circle cx="8" cy="8" r="6.900" fill="none" stroke="#818da1" stroke-width="1.800"/><path d="M8 4v4.300l2.800 1.700" fill="none" stroke="#818da1" stroke-width="1.700"/></svg></div><div class="dt" style="top:82.4px">06.10.2025 16:45</div><div class="cn" style="left:458.4px;top:142px">0</div><div class="abs" style="left:508px;top:138.8px"><svg width="43.6" height="43.6" viewBox="0 0 20 20" style=""><path d="M10 1.200a8.800 8.800 0 1 0 0 17.600h8.800v-8.800a8.800 8.800 0 0 0-8.800-8.800z" fill="none" stroke="#55637d" stroke-width="1.800"/><path d="M7 6.400h3.500M7 9.700h6.200M7 13h6.200M7 6.400v6.600" fill="none" stroke="#5f6d86" stroke-width="1.350"/></svg></div></div>
<div class="sb" style="left:608.8px;top:48px;height:240px"></div>
</div>
<div class="cell" style="left:2017.2px;top:1852.4px">
<div class="bd"></div>
<div class="cnt">1</div>
<div class="card" style="top:54.4px;width:599.6px;height:215.6px"><div class="bd"></div><div class="stripe" style="background:#5aa66a"></div><div class="abs" style="left:35.6px;top:20px"><svg width="32" height="36" viewBox="0 0 8 9" style=""><path d="M1.600 .55h3.200l2.650 2.650v4.350a.9.9 0 0 1-.9.9h-4.950a.9.9 0 0 1-.9-.9v-6.100a.9.9 0 0 1 .9-.9z" fill="none" stroke="#595e66" stroke-width="1"/><path d="M4.700 .7v2.600h2.600" fill="none" stroke="#595e66" stroke-width=".85"/><path d="M2.400 6.100c.5-.95.9.5 1.500-.3s.6.400 1.500 0" fill="none" stroke="#595e66" stroke-width=".8"/></svg></div><div class="tt" style="top:19.6px;letter-spacing:0.156px">ALT-0020 Обеспечить автомат…</div><div class="abs" style="left:35.2px;top:86.4px"><svg width="42.4" height="42.4" viewBox="0 0 20 20" style=""><circle cx="10" cy="10" r="10" fill="#414c6e"/><ellipse cx="10" cy="8.600" rx="4.700" ry="5.500" fill="#f4f6fa"/><path d="M3.300 17.400c.5-2.500 2.400-3.300 4.700-4h4c2.300.7 4.200 1.500 4.700 4a10 10 0 0 1-13.400 0z" fill="#f4f6fa"/></svg></div><div class="nm" style="top:90.4px">Иванов Иван Иванович</div><div class="cn" style="left:469.2px;top:158px">0</div><div class="abs" style="left:518.8px;top:154.8px"><svg width="43.6" height="43.6" viewBox="0 0 20 20" style=""><path d="M10 1.200a8.800 8.800 0 1 0 0 17.600h8.800v-8.800a8.800 8.800 0 0 0-8.800-8.800z" fill="none" stroke="#55637d" stroke-width="1.800"/><path d="M7 6.400h3.500M7 9.700h6.200M7 13h6.200M7 6.400v6.600" fill="none" stroke="#5f6d86" stroke-width="1.350"/></svg></div></div>
</div>
<div class="cell" style="left:2648.8px;top:1852.4px">
<div class="bd"></div>
<div class="cnt">2</div>
<div class="card" style="top:54.4px;width:588.8px;height:247.2px"><div class="bd"></div><div class="stripe" style="background:#5aa66a"></div><div class="abs" style="left:35.6px;top:20px"><svg width="32" height="36" viewBox="0 0 8 9" style=""><path d="M1.600 .55h3.200l2.650 2.650v4.350a.9.9 0 0 1-.9.9h-4.950a.9.9 0 0 1-.9-.9v-6.100a.9.9 0 0 1 .9-.9z" fill="none" stroke="#595e66" stroke-width="1"/><path d="M4.700 .7v2.600h2.600" fill="none" stroke="#595e66" stroke-width=".85"/><path d="M2.400 6.100c.5-.95.9.5 1.500-.3s.6.400 1.500 0" fill="none" stroke="#595e66" stroke-width=".8"/></svg></div><div class="tt" style="top:19.6px;letter-spacing:-0.076px">ALT-0016 Вывести на форму к…</div><div class="ds" style="top:74.4px">Обеспечить отображение</div><div class="ds" style="top:118px">информации</div><div class="cn" style="left:458.4px;top:189.6px">0</div><div class="abs" style="left:508px;top:186.4px"><svg width="43.6" height="43.6" viewBox="0 0 20 20" style=""><path d="M10 1.200a8.800 8.800 0 1 0 0 17.600h8.800v-8.800a8.800 8.800 0 0 0-8.800-8.800z" fill="none" stroke="#55637d" stroke-width="1.800"/><path d="M7 6.400h3.500M7 9.700h6.200M7 13h6.200M7 6.400v6.600" fill="none" stroke="#5f6d86" stroke-width="1.350"/></svg></div></div>
<div class="sb" style="left:608.8px;top:52px;height:240px"></div>
</div>
<div class="abs" style="left:0;top:2038.4px;width:4096px;height:5.6px;background:#1c1c1c"></div>
<div class="abs" style="left:104px;top:2038.8px;width:612px;height:5.2px;background:#f0f0f0"></div>
</div></body></html>
